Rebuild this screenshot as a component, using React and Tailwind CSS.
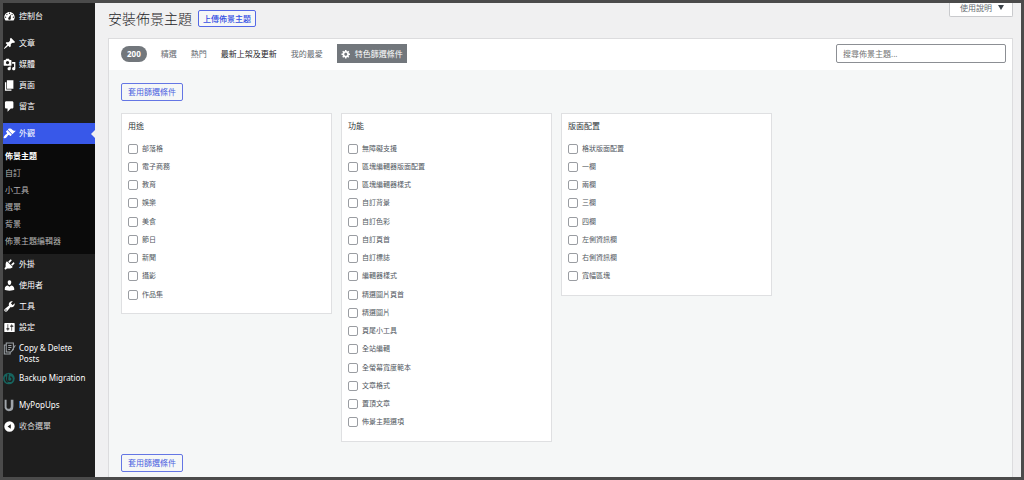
import React, { useState } from 'react';
import clsx from 'clsx';

const icons = {
    dashboard: 'M3.76 16h12.48c1.1-1.37 1.76-3.11 1.76-5 0-4.42-3.58-8-8-8s-8 3.58-8 8c0 1.89.66 3.63 1.76 5zM10 4c.55 0 1 .45 1 1s-.45 1-1 1-1-.45-1-1 .45-1 1-1zM6 6c.55 0 1 .45 1 1s-.45 1-1 1-1-.45-1-1 .45-1 1-1zm8 0c.55 0 1 .45 1 1s-.45 1-1 1-1-.45-1-1 .45-1 1-1zm-5.37 5.55L12 7v6c0 1.1-.9 2-2 2s-2-.9-2-2c0-.57.24-1.08.63-1.45zM4 10c.55 0 1 .45 1 1s-.45 1-1 1-1-.45-1-1 .45-1 1-1zm12 0c.55 0 1 .45 1 1s-.45 1-1 1-1-.45-1-1 .45-1 1-1z',
    post: 'M10.44 3.02l1.82-1.82 6.36 6.35-1.83 1.82c-1.05-.68-2.48-.57-3.41.36l-.75.75c-.92.93-1.04 2.35-.35 3.41l-1.83 1.82-2.41-2.41-2.8 2.79c-.42.42-3.38 2.71-3.8 2.29s1.86-3.39 2.28-3.81l2.79-2.79L4.1 9.36l1.83-1.82c1.05.69 2.48.57 3.4-.36l.75-.75c.93-.92 1.05-2.35.36-3.41z',
    media: 'M13 11V4c0-.55-.45-1-1-1h-1.67L9 1H5L3.67 3H2c-.55 0-1 .45-1 1v7c0 .55.45 1 1 1h10c.55 0 1-.45 1-1zM7 4.5c1.38 0 2.5 1.12 2.5 2.5S8.38 9.5 7 9.5 4.5 8.38 4.5 7 5.62 4.5 7 4.5zM14 6h5v10.5c0 1.38-1.12 2.5-2.5 2.5S14 17.88 14 16.5s1.12-2.5 2.5-2.5c.17 0 .34.02.5.05V9h-3V6zm-4 8.05V13h2v3.5c0 1.38-1.12 2.5-2.5 2.5S7 17.88 7 16.5 8.12 14 9.5 14c.17 0 .34.02.5.05z',
    page: 'M6 15V2h10v13H6zm-1 1h8v2H3V5h2v11z',
    comments: 'M5 2h9c1.1 0 2 .9 2 2v7c0 1.1-.9 2-2 2h-2l-5 5v-5H5c-1.1 0-2-.9-2-2V4c0-1.1.9-2 2-2z',
    appearance: 'M14.48 11.06L7.41 3.99l1.5-1.5c.5-.56 2.3-.47 3.51.32 1.21.8 1.43 1.28 2.91 2.1 1.18.64 2.45 1.26 4.45.85zm-.71.71L6.7 4.7 4.93 6.47c-.39.39-.39 1.02 0 1.41l1.06 1.06c.39.39.39 1.03 0 1.42-.6.6-1.43 1.11-2.21 1.69-.35.26-.7.53-1.01.84C1.43 14.23.4 16.08 1.4 17.07c.99 1 2.84-.03 4.18-1.36.31-.31.58-.66.85-1.02.57-.78 1.08-1.61 1.69-2.21.39-.39 1.02-.39 1.41 0l1.06 1.06c.39.39 1.02.39 1.41 0z',
    plugins: 'M13.11 4.36L9.87 7.6 8 5.73l3.24-3.24c.35-.34 1.05-.2 1.56.32.52.51.66 1.21.31 1.55zm-8 1.77l.91-1.12 9.01 9.01-1.19.84c-.71.71-2.63 1.16-3.82 1.16H6.14L4.9 17.26c-.59.59-1.54.59-2.12 0-.59-.58-.59-1.53 0-2.12l1.24-1.24v-3.88c0-1.13.4-3.19 1.09-3.89zm7.26 3.97l3.24-3.24c.34-.35 1.04-.21 1.55.31.52.51.66 1.21.31 1.55l-3.24 3.25z',
    users: 'M10 9.25c-2.27 0-2.73-3.44-2.73-3.44C7 4.02 7.82 2 9.97 2c2.16 0 2.98 2.02 2.71 3.81 0 0-.41 3.44-2.68 3.44zm0 2.57L12.72 10c2.39 0 4.52 2.33 4.52 4.53v2.49s-3.65 1.13-7.24 1.13c-3.65 0-7.24-1.13-7.24-1.13v-2.49c0-2.25 1.94-4.48 4.47-4.48z',
    tools: 'M16.68 9.77c-1.34 1.34-3.3 1.67-4.95.99l-5.41 6.52c-.99.99-2.59.99-3.58 0s-.99-2.59 0-3.57l6.52-5.42c-.68-1.65-.35-3.61.99-4.95 1.28-1.28 3.12-1.62 4.72-1.06l-2.89 2.89 2.82 2.82 2.86-2.87c.53 1.58.18 3.39-1.08 4.65zM3.81 16.21c.4.39 1.04.39 1.43 0 .4-.4.4-1.04 0-1.43-.39-.4-1.03-.4-1.43 0-.39.39-.39 1.03 0 1.43z',
    settings: 'M18 16V4c0-.55-.45-1-1-1H3c-.55 0-1 .45-1 1v12c0 .55.45 1 1 1h14c.55 0 1-.45 1-1zM8 11h1c.55 0 1 .45 1 1s-.45 1-1 1H8v1.5c0 .28-.22.5-.5.5s-.5-.22-.5-.5V13H6c-.55 0-1-.45-1-1s.45-1 1-1h1V5.5c0-.28.22-.5.5-.5s.5.22.5.5V11zm5-2h-1c-.55 0-1-.45-1-1s.45-1 1-1h1V5.5c0-.28.22-.5.5-.5s.5.22.5.5V7h1c.55 0 1 .45 1 1s-.45 1-1 1h-1v5.5c0 .28-.22.5-.5.5s-.5-.22-.5-.5V9z',
    collapse: 'M10 2a8 8 0 1 0 0 16 8 8 0 0 0 0-16zm2 11.5L7 10l5-3.5v7z',
    gear: 'M18 12h-2.18c-.17.7-.44 1.35-.81 1.93l1.54 1.54-2.1 2.1-1.54-1.54c-.58.36-1.23.63-1.91.79V19H8v-2.18c-.68-.16-1.33-.43-1.91-.79l-1.54 1.54-2.12-2.12 1.54-1.54c-.36-.58-.63-1.23-.79-1.91H1V9.03h2.17c.16-.7.44-1.35.8-1.94L2.43 5.55l2.1-2.1 1.54 1.54c.58-.37 1.24-.64 1.93-.81V2h3v2.18c.68.16 1.33.43 1.91.79l1.54-1.54 2.12 2.12-1.54 1.54c.36.59.64 1.24.8 1.94H18V12zm-8.5 1.5c1.66 0 3-1.34 3-3s-1.34-3-3-3-3 1.34-3 3 1.34 3 3 3z',
};

const menuGroups = [
    [{ icon: 'dashboard', label: '控制台' }],
    [
        { icon: 'post', label: '文章' },
        { icon: 'media', label: '媒體' },
        { icon: 'page', label: '頁面' },
        { icon: 'comments', label: '留言' },
    ],
    [
        {
            icon: 'appearance',
            label: '外觀',
            children: ['佈景主題', '自訂', '小工具', '選單', '背景', '佈景主題編輯器'],
        },
        { icon: 'plugins', label: '外掛' },
        { icon: 'users', label: '使用者' },
        { icon: 'tools', label: '工具' },
        { icon: 'settings', label: '設定' },
        { icon: 'copy', label: 'Copy & Delete Posts' },
        { icon: 'backup', label: 'Backup Migration' },
    ],
    [{ icon: 'popups', label: 'MyPopUps' }],
];

const sorts = ['精選', '熱門', '最新上架及更新', '我的最愛'];

const filterGroups = [
    {
        title: '用途',
        options: ['部落格', '電子商務', '教育', '娛樂', '美食', '節日', '新聞', '攝影', '作品集'],
    },
    {
        title: '功能',
        options: [
            '無障礙支援', '區塊編輯器版面配置', '區塊編輯器樣式', '自訂背景',
            '自訂色彩', '自訂頁首', '自訂標誌', '編輯器樣式',
            '精選圖片頁首', '精選圖片', '頁尾小工具', '全站編輯',
            '全螢幕寬度範本', '文章格式', '置頂文章', '佈景主題選項',
        ],
    },
    {
        title: '版面配置',
        options: ['格狀版面配置', '一欄', '兩欄', '三欄', '四欄', '左側資訊欄', '右側資訊欄', '寬幅區塊'],
    },
];

const Icon = ({ name, className }) => {
    if (name === 'copy') {
        return (
            <svg viewBox="0 0 20 20" className={className} fill="none" stroke="#9ca1a6" strokeWidth="1.6" aria-hidden="true">
                <path d="M5 1.5h11v10l-4 4H5z" />
                <path d="M5 4.5H2v14h9v-3M8 5.5h5M8 8.5h5M8 11.5h3M19 5l-5 8" />
            </svg>
        );
    }
    if (name === 'backup') {
        return (
            <svg viewBox="0 0 20 20" className={className} fill="none" aria-hidden="true">
                <circle cx="9" cy="10" r="9" fill="#17645f" />
                <path d="M8 3l-1 8a3.5 3.5 0 1 0 4-3.5M4 7c-1 4 0 7 3 9" stroke="#1e1e1e" strokeWidth="2" />
            </svg>
        );
    }
    if (name === 'popups') {
        return (
            <svg viewBox="0 0 20 20" className={className} fill="none" stroke="#a0a5aa" aria-hidden="true">
                <path d="M4 1v10a5 5 0 0 0 5 6" strokeWidth="3" />
                <path d="M8 17c4 0 6-2 6-6V1" strokeWidth="4" />
            </svg>
        );
    }
    return (
        <svg viewBox="0 0 20 20" className={className} fill="currentColor" aria-hidden="true">
            <path d={icons[name]} />
        </svg>
    );
};

const MenuItem = ({ item }) => (
    <li>
        <a
            href="#"
            className={clsx(
                'relative flex items-start gap-[3px] py-1 pr-2 text-white',
                item.children ? 'bg-[#3858e9]' : 'hover:text-[#7b90ff]'
            )}
        >
            <Icon name={item.icon} className="size-[13px] shrink-0" />
            <span className="leading-[11px]">{item.label}</span>
            {item.children && (
                <span className="absolute right-0 top-1/2 -translate-y-1/2 border-y-4 border-r-4 border-y-transparent border-r-[#f0f0f1]" />
            )}
        </a>
        {item.children && (
            <ul className="bg-[#0a0a0a] pb-[5px] pt-[3px]">
                {item.children.map((child, i) => (
                    <li key={child}>
                        <a
                            href="#"
                            className={clsx(
                                'block pl-0.5 text-[8px] leading-[17px]',
                                i === 0 ? 'font-bold text-white' : 'text-[#b4b4b4]'
                            )}
                        >
                            {child}
                        </a>
                    </li>
                ))}
            </ul>
        )}
    </li>
);

const Sidebar = () => (
    <nav className="flex w-[92px] shrink-0 flex-col gap-1.5 bg-[#1e1e1e] pt-[3px] text-[8px]">
        {menuGroups.map((group, i) => (
            <ul key={i}>
                {group.map((item) => (
                    <MenuItem key={item.label} item={item} />
                ))}
                {i === menuGroups.length - 1 && (
                    <li>
                        <button type="button" className="flex w-full items-start gap-[3px] py-1 text-left text-[#d5d5d5]">
                            <Icon name="collapse" className="size-[13px] shrink-0 text-white" />
                            <span className="leading-[11px]">收合選單</span>
                        </button>
                    </li>
                )}
            </ul>
        ))}
    </nav>
);

const ApplyButton = () => (
    <button
        type="button"
        className="rounded-xs border border-[#6476e4] px-1.5 text-[8px] leading-4 text-[#4a5fe0] hover:bg-white"
    >
        套用篩選條件
    </button>
);

const FilterGroup = ({ title, options, checked, onToggle }) => (
    <fieldset className="border border-[#dfe0e2] bg-white px-1.5 pb-[9px] pt-[7px]">
        <legend className="float-left w-full text-[8px] leading-[10px] text-[#2c3338]">{title}</legend>
        <ul className="clear-both pt-[9px]">
            {options.map((option) => (
                <li key={option} className="nth-[4n]:pb-px">
                    <label className="flex h-[18px] items-center gap-1 text-[7px] text-[#50575e]">
                        <input
                            type="checkbox"
                            checked={checked.includes(option)}
                            onChange={() => onToggle(option)}
                            className="size-2.5 appearance-none rounded-xs border border-[#9a9da2] bg-white checked:bg-[#3858e9]"
                        />
                        {option}
                    </label>
                </li>
            ))}
        </ul>
    </fieldset>
);

const App = () => {
    const [checked, setChecked] = useState([]);
    const [search, setSearch] = useState('');

    const toggleOption = (option) => {
        setChecked(
            checked.includes(option) ? checked.filter((o) => o !== option) : [...checked, option]
        );
    };

    return (
        <div className="flex min-h-screen border-[3px] border-[#4b4b4b] bg-[#f0f0f1] font-['Noto_Sans','Noto_Sans_CJK_TC',sans-serif]">
            <Sidebar />

            <main className="flex min-w-0 flex-1 flex-col pl-[13px] pr-2">
                {/* Page heading */}
                <header className="flex items-start justify-between pb-[9px]">
                    <div className="flex items-center gap-1.5 pt-[5px]">
                        <h1 className="text-[14px] font-light leading-[21px] text-[#1d2327]">安裝佈景主題</h1>
                        <button
                            type="button"
                            className="rounded-xs border border-[#5468e6] bg-[#f6f7f7] px-1 text-[8px] font-medium leading-[15px] text-[#3450e4]"
                        >
                            上傳佈景主題
                        </button>
                    </div>
                    <button
                        type="button"
                        className="flex items-center gap-1.5 rounded-b-xs border border-t-0 border-[#c9cacd] bg-white pb-1 pl-2.5 pr-2 text-[8px] leading-[9px] text-[#646970]"
                    >
                        使用說明
                        <span className="border-x-3 border-t-5 border-x-transparent border-t-[#3c434a]" />
                    </button>
                </header>

                <section className="flex-1 border border-b-0 border-[#dcdcde] bg-[#f5f7f7]">
                    {/* Sorting and search bar */}
                    <div className="flex items-center justify-between bg-white pb-[7px] pl-3 pr-1.5 pt-[5px]">
                        <div className="flex items-center gap-3.5 text-[8px]">
                            <span className="rounded-full bg-[#72777c] px-1.5 text-[8px] font-bold leading-4 text-white">200</span>
                            {sorts.map((sort) => (
                                <a
                                    key={sort}
                                    href="#"
                                    className={sort === '最新上架及更新' ? 'text-[#1d2327]' : 'text-[#646970]'}
                                >
                                    {sort}
                                </a>
                            ))}
                            <button
                                type="button"
                                className="flex items-center gap-1 bg-[#72777c] px-1 leading-[19px] text-white"
                            >
                                <Icon name="gear" className="size-2.5" />
                                特色篩選條件
                            </button>
                        </div>
                        <input
                            type="search"
                            aria-label="搜尋佈景主題"
                            placeholder="搜尋佈景主題..."
                            value={search}
                            onChange={(e) => setSearch(e.target.value)}
                            className="h-[19px] w-[170px] rounded-xs border border-[#8c8f94] bg-white px-1.5 text-[8px] text-[#2c3338] placeholder:text-[#757575]"
                        />
                    </div>

                    {/* Feature filters */}
                    <div className="flex flex-col items-start gap-3 pb-1 pl-3 pr-5 pt-[13px]">
                        <ApplyButton />
                        <div className="grid w-full grid-cols-4 items-start gap-[9px]">
                            {filterGroups.map((group) => (
                                <FilterGroup
                                    key={group.title}
                                    title={group.title}
                                    options={group.options}
                                    checked={checked}
                                    onToggle={toggleOption}
                                />
                            ))}
                        </div>
                        <ApplyButton />
                    </div>
                </section>
            </main>
        </div>
    );
};

export default App;
